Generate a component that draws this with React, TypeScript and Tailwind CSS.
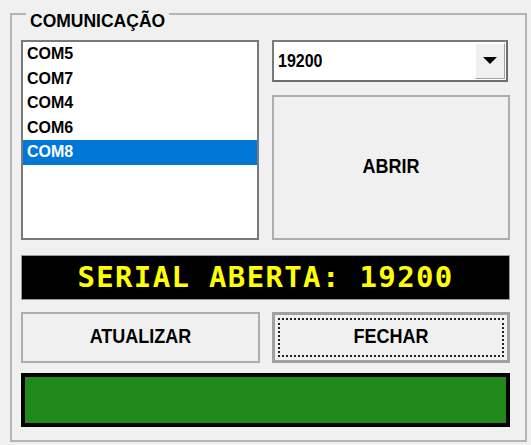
import React from "react";

const items = ["COM5", "COM7", "COM4", "COM6", "COM8"];

export default function App() {
  const sans = { fontFamily: '"Liberation Sans", Arial, sans-serif' };
  return (
    <div className="w-[531px] h-[445px] bg-[#f0f0f0] pt-[13px] pl-[10px]" style={sans}>
      <div className="relative w-[517px] h-[429px] border-2 border-[#b4b4b4] pt-[25px] pl-[9px] pr-[15px]">
        <div className="absolute left-[14px] top-[-4px] bg-[#f0f0f0] px-[4px] text-[17.5px] leading-[20px] font-bold text-black">
          COMUNICAÇÃO
        </div>
        <div className="flex gap-[13px]">
          <div className="w-[238px] h-[200px] border-2 border-[#7a7a7a] bg-white">
            {items.map((it) => (
              <div
                key={it}
                className={
                  "h-[24.5px] flex items-center pl-[4px] text-[16px] font-bold " +
                  (it === "COM8" ? "bg-[#0078d7] text-white" : "text-black")
                }
              >
                <span className="inline-block scale-y-[1.08]">{it}</span>
              </div>
            ))}
          </div>
          <div className="w-[238px] flex flex-col gap-[13px]">
            <div className="h-[42px] w-[236px] border-2 border-t-[#7a7a7a] border-l-[#7a7a7a] border-r-[#6d6d6d] border-b-[#6d6d6d] bg-white flex items-stretch p-[1px]">
              <div className="flex-1 flex items-center pl-[3px] text-[16px] font-bold text-black">
                <span className="inline-block scale-y-[1.1]">19200</span>
              </div>
              <div className="w-[30px] bg-[#f0f0f0] border border-t-white border-l-white border-r-[#a0a0a0] border-b-[#a0a0a0] flex items-center justify-center">
                <svg width="14" height="8" viewBox="0 0 14 8">
                  <polygon points="0,0 14,0 7,7" fill="#000" />
                </svg>
              </div>
            </div>
            <div className="h-[145px] border-2 border-[#adadad] bg-[#f0f0f0] flex items-center justify-center text-[18px] font-bold text-black">
              <span className="inline-block scale-y-[1.08]">ABRIR</span>
            </div>
          </div>
        </div>
        <div
          className="mt-[15px] w-[489px] h-[45px] border border-[#9a9a9a] bg-black flex items-center justify-center text-[#ffff00] text-[29px] font-bold tracking-[1.35px]"
          style={{ fontFamily: '"DejaVu Sans Mono", "Liberation Mono", monospace' }}
        >
          SERIAL ABERTA: 19200
        </div>
        <div className="mt-[12px] flex gap-[12px]">
          <div className="w-[239px] h-[51px] border-2 border-[#adadad] bg-[#f0f0f0] flex items-center justify-center text-[18px] font-bold text-black">
            <span className="inline-block scale-y-[1.08]">ATUALIZAR</span>
          </div>
          <div className="w-[238px] h-[51px] border-[3px] border-[#a0a0a0] bg-[#f0f0f0] p-[3px]">
            <div className="w-full h-full border-2 border-dotted border-[#222] flex items-center justify-center text-[18px] font-bold text-black">
              <span className="inline-block scale-y-[1.08]">FECHAR</span>
            </div>
          </div>
        </div>
        <div className="mt-[10px] w-[489px] h-[54px] border-4 border-black bg-[#21881a]" />
      </div>
    </div>
  );
}
